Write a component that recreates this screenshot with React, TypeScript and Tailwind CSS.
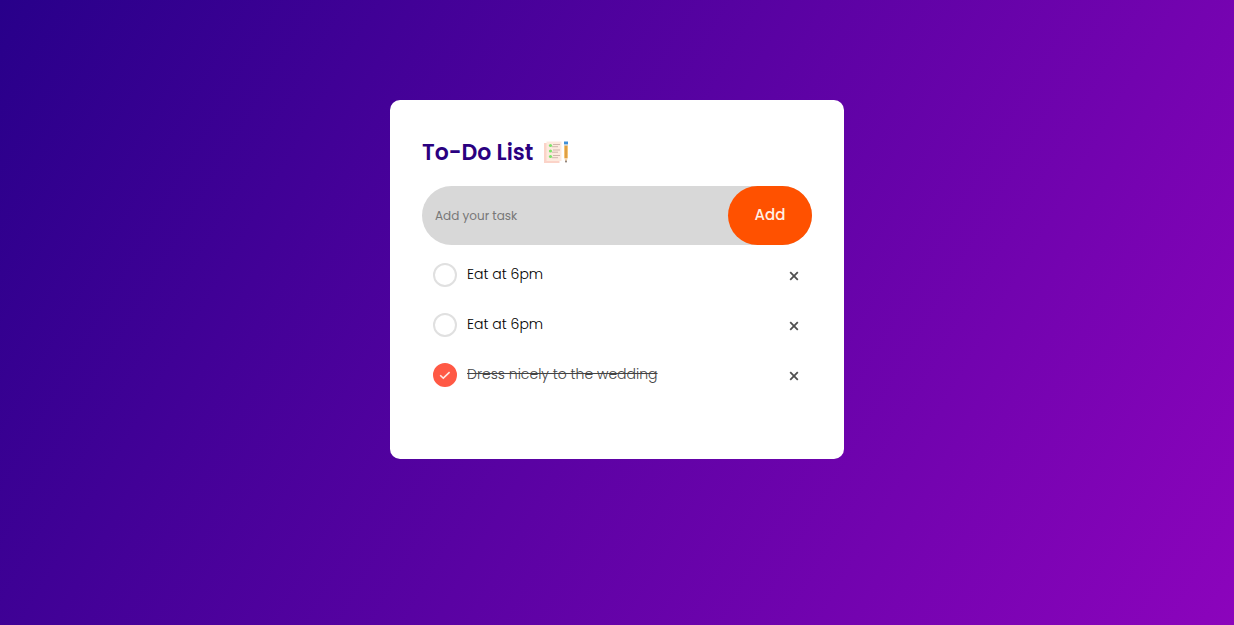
import { useState } from "react";
import type { FormEvent } from "react";

type Task = { id: number; text: string; done: boolean };

const initialTasks: Task[] = [
  { id: 1, text: "Eat at 6pm", done: false },
  { id: 2, text: "Eat at 6pm", done: false },
  { id: 3, text: "Dress nicely to the wedding", done: true },
];

function ChecklistIcon() {
  return (
    <svg viewBox="0 0 26 24" className="h-6 w-[26px]" aria-hidden="true">
      <path d="M1 3H16.500v20H1Z" fill="#fbd3c8" />
      <path d="M3.500 1.500h15v19.500h-15Z" fill="#fdeade" />
      <g fill="#7be36a">
        <circle cx="7.500" cy="5.500" r="1.600" />
        <circle cx="7.500" cy="11" r="1.600" />
        <circle cx="7.500" cy="16.500" r="1.600" />
      </g>
      <g stroke="#c4a8a0" strokeWidth="0.800">
        <path d="M10 4.500h7M10 10h7M10 15.500h7" />
        <path d="M9 6.700h6M9 12.200h6M9 17.700h6" />
      </g>
      <path d="M21 1.500h4v3h-4Z" fill="#3f8fd8" />
      <path d="M21 4.500h4v1.200h-4Z" fill="#c3d3df" />
      <path d="M21.200 5.700h3.600V18h-3.600Z" fill="#f5b450" />
      <path d="M22.600 5.700h.8V18h-.8Z" fill="#b98235" />
      <path d="M21.200 18h3.600L23 23Z" fill="#f6d5ac" />
      <path d="m22.200 20.800.8 2.200.8-2.200Z" fill="#33303a" />
    </svg>
  );
}

export default function App() {
  const [tasks, setTasks] = useState<Task[]>(initialTasks);
  const [draft, setDraft] = useState("");

  const addTask = (event: FormEvent) => {
    event.preventDefault();
    const text = draft.trim();
    if (!text) return;
    setTasks([...tasks, { id: Date.now(), text, done: false }]);
    setDraft("");
  };

  const toggleTask = (id: number) =>
    setTasks(tasks.map((t) => (t.id === id ? { ...t, done: !t.done } : t)));

  return (
    <div className="min-h-screen bg-[linear-gradient(120deg,#28008a,#8c04bc)] px-4 pt-[100px] pb-10 font-[Poppins,Inter,sans-serif]">
      <main className="mx-auto w-full max-w-[454px] rounded-[10px] bg-white px-8 pt-10 pb-[59px]">
        <h1 className="flex h-6 items-center gap-[10px] text-[22px] font-semibold text-[#2a0080]">
          To-Do List
          <ChecklistIcon />
        </h1>

        <form onSubmit={addTask} className="mt-[22px] flex h-[59px] rounded-full bg-[#d8d8d8]">
          <input
            type="text"
            aria-label="Add your task"
            placeholder="Add your task"
            value={draft}
            onChange={(e) => setDraft(e.target.value)}
            className="min-w-0 flex-1 bg-transparent px-[13px] text-xs text-[#333333] outline-none placeholder:text-[#777777]"
          />
          <button type="submit" className="w-[84px] rounded-full bg-[#ff5100] text-[15px] font-medium text-[#fff0e6]">
            Add
          </button>
        </form>

        <ul className="mt-[5px]">
          {tasks.map((task) => (
            <li key={task.id} className="flex h-[50px] items-center pr-2 pl-[11px]">
              <label className="flex flex-1 cursor-pointer items-center gap-[10px]">
                <span className="grid size-6 place-items-center">
                  <input
                    type="checkbox"
                    checked={task.done}
                    onChange={() => toggleTask(task.id)}
                    className="col-start-1 row-start-1 size-6 appearance-none rounded-full border-2 border-[#e0e0e0] bg-white checked:border-[#ff5945] checked:bg-[#ff5945]"
                  />
                  {task.done && (
                    <svg viewBox="0 0 12 10" className="pointer-events-none z-10 col-start-1 row-start-1 h-[10px] w-3" fill="none" aria-hidden="true">
                      <path d="m1.200 5.200 3.100 3 6.300-6" stroke="#ffe9e4" strokeWidth="1.600" />
                    </svg>
                  )}
                </span>
                <span className={task.done ? "pb-0.5 text-sm font-light text-[#444444] line-through" : "pb-0.5 text-sm font-light text-[#000000]"}>
                  {task.text}
                </span>
              </label>
              <button
                type="button"
                aria-label="Delete task"
                onClick={() => setTasks(tasks.filter((t) => t.id !== task.id))}
                className="grid size-5 place-items-center pt-0.5"
              >
                <svg viewBox="0 0 10 10" className="size-[10px]" aria-hidden="true">
                  <path d="m1.200 1.200 7.600 7.600M8.800 1.200 1.200 8.800" stroke="#505050" strokeWidth="1.800" />
                </svg>
              </button>
            </li>
          ))}
        </ul>
      </main>
    </div>
  );
}
